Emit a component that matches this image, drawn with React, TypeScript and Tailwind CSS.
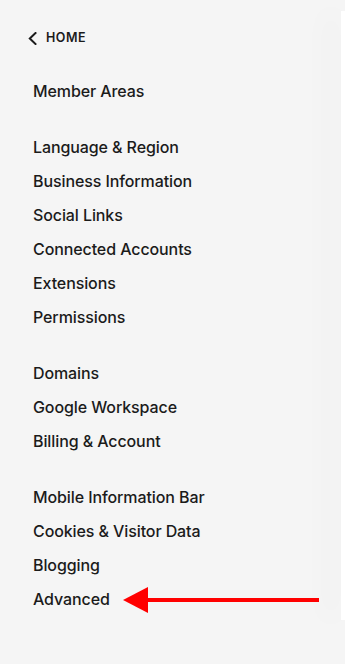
const groups = [
  ["Member Areas"],
  ["Language & Region", "Business Information", "Social Links", "Connected Accounts", "Extensions", "Permissions"],
  ["Domains", "Google Workspace", "Billing & Account"],
  ["Mobile Information Bar", "Cookies & Visitor Data", "Blogging", "Advanced"],
];

export default function App() {
  return (
    <div className="relative flex h-[664px] w-[345px] overflow-hidden bg-[#f5f5f5] text-[#1b1b1b]" style={{ fontFamily: "Inter, 'Noto Sans', sans-serif" }}>
      <div className="flex-1 pt-[28px]">
        <div className="flex h-[20px] items-center pl-[28px]">
          <svg width="9" height="13" viewBox="0 0 9 13" fill="none">
            <polyline points="7.5,1 1.8,6.5 7.5,12" stroke="#1b1b1b" strokeWidth="2" strokeLinecap="square" />
          </svg>
          <span className="ml-[9px] text-[12.5px] font-semibold tracking-[0.5px]">HOME</span>
        </div>
        <nav className="mt-[26px] flex flex-col gap-[22px] pl-[33px]">
          {groups.map((g, i) => (
            <ul key={i} className="flex flex-col">
              {g.map((item) => (
                <li key={item} className="flex h-[34px] items-center text-[16px] font-medium tracking-[-0.1px]">
                  {item}
                </li>
              ))}
            </ul>
          ))}
        </nav>
      </div>
      {/* edge of the main panel */}
      <div className="mt-[11px] h-[609px] w-[4px] bg-white shadow-[-12px_0_26px_rgba(0,0,0,0.08)]" />
      {/* red annotation arrow */}
      <svg className="absolute left-[120px] top-[585px]" width="204" height="30" viewBox="0 0 204 30">
        <polygon points="3,15 28,2 28,28" fill="#ff0000" />
        <rect x="26" y="13" width="173" height="4" fill="#ff0000" />
      </svg>
    </div>
  );
}
